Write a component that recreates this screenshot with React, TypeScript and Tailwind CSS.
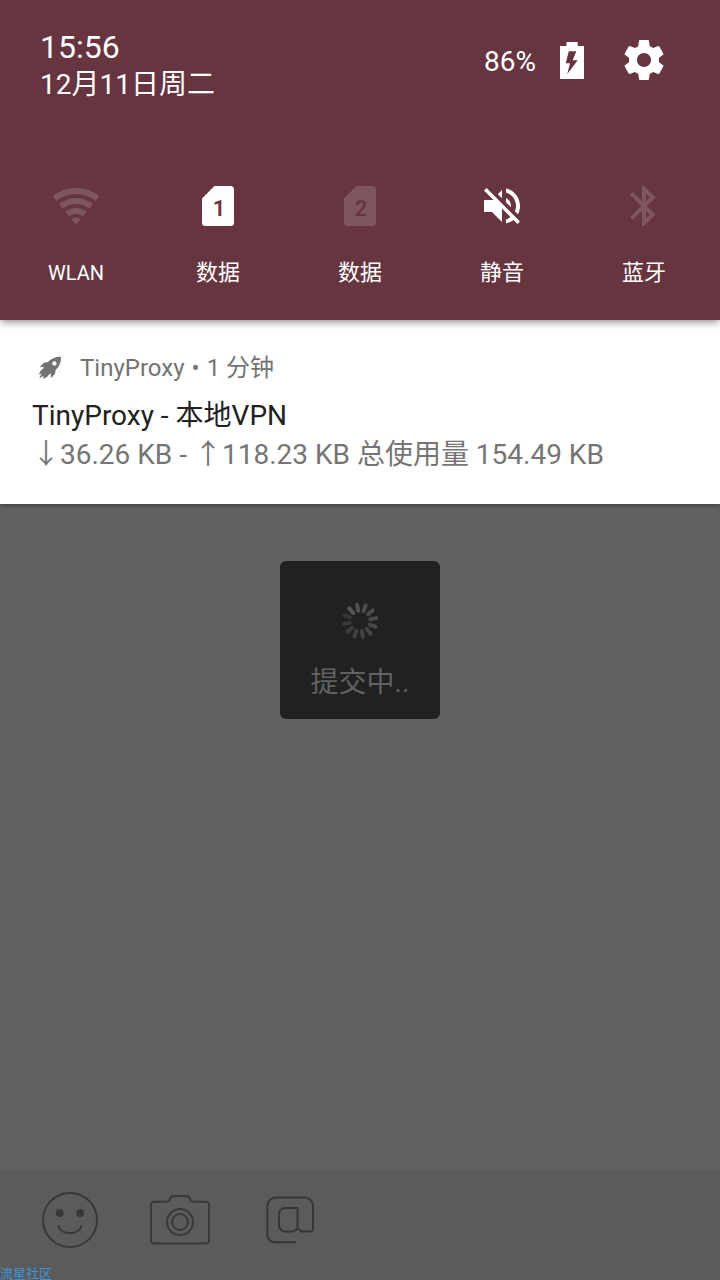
import type { ReactNode } from 'react';

const MUTED = '#7f555f';

function WifiIcon() {
  return (
    <svg width="48" height="48" viewBox="0 0 48 48" fill="none" stroke={MUTED} strokeWidth="6" aria-hidden="true">
      <path d="M2.6 16.6A34 34 0 0 1 45.4 16.6" />
      <path d="M8.9 24.4A24 24 0 0 1 39.1 24.4" />
      <path d="M15.2 32.1A14 14 0 0 1 32.8 32.1" />
      <path d="M24 42.6L19.4 37.3A7.3 7.3 0 0 1 28.6 37.3Z" fill={MUTED} stroke="none" />
    </svg>
  );
}

function SimIcon({ slot, color }: { slot: string; color: string }) {
  return (
    <svg width="48" height="48" viewBox="0 0 48 48" aria-hidden="true">
      <path d="M20.4 4H36.5A3.5 3.5 0 0 1 40 7.5V40.5A3.5 3.5 0 0 1 36.5 44H11.5A3.5 3.5 0 0 1 8 40.5V16.4Z" fill={color} />
      <text x="25" y="34" textAnchor="middle" className="font-['Roboto',sans-serif] text-[22px] font-semibold" fill="#663540">
        {slot}
      </text>
    </svg>
  );
}

function MuteIcon() {
  return (
    <svg width="48" height="48" viewBox="0 0 24 24" fill="#fff" aria-hidden="true">
      <path d="M16.5 12c0-1.77-1.02-3.29-2.5-4.03v2.21l2.45 2.45c.03-.2.05-.41.05-.63zm2.5 0c0 .94-.2 1.82-.54 2.64l1.51 1.51C20.63 14.91 21 13.5 21 12c0-4.28-2.99-7.86-7-8.77v2.06c2.89.86 5 3.54 5 6.71zM4.27 3L3 4.27 7.73 9H3v6h4l5 5v-6.73l4.25 4.25c-.67.52-1.42.93-2.25 1.18v2.06c1.38-.31 2.63-.95 3.69-1.81L19.73 21 21 19.73l-9-9L4.27 3zM12 4L9.91 6.09 12 8.18V4z" />
    </svg>
  );
}

function BluetoothIcon() {
  return (
    <svg width="48" height="48" viewBox="0 0 24 24" fill={MUTED} aria-hidden="true">
      <path d="M17.71 7.71L12 2h-1v7.59L6.41 5 5 6.41 10.59 12 5 17.59 6.41 19 11 14.41V22h1l5.71-5.71-4.3-4.29 4.3-4.29zM13 5.83l1.88 1.88L13 9.59V5.83zm1.88 10.46L13 18.17v-3.76l1.88 1.88z" />
    </svg>
  );
}

function BatteryIcon() {
  return (
    <svg width="24" height="37" viewBox="0 0 24 37" fill="#fff" fillRule="evenodd" aria-hidden="true">
      <path d="M6.5 0H17.7V4H24V37H0V4H6.5ZM8.8 9.3L5.7 21.3H10L7.3 32L17.7 18.3H12.7L16.3 9.3Z" />
    </svg>
  );
}

function GearIcon() {
  return (
    <svg width="48" height="48" viewBox="0 0 24 24" fill="#fff" aria-hidden="true">
      <path d="M19.43 12.98c.04-.32.07-.64.07-.98s-.03-.66-.07-.98l2.11-1.65c.19-.15.24-.42.12-.64l-2-3.46c-.12-.22-.39-.3-.61-.22l-2.49 1c-.52-.4-1.08-.73-1.69-.98l-.38-2.65C14.46 2.18 14.25 2 14 2h-4c-.25 0-.46.18-.49.42l-.38 2.65c-.61.25-1.17.59-1.69.98l-2.49-1c-.23-.09-.49 0-.61.22l-2 3.46c-.13.22-.07.49.12.64l2.11 1.65c-.04.32-.07.65-.07.98s.03.66.07.98l-2.11 1.65c-.19.15-.24.42-.12.64l2 3.46c.12.22.39.3.61.22l2.49-1c.52.4 1.08.73 1.69.98l.38 2.65c.03.24.24.42.49.42h4c.25 0 .46-.18.49-.42l.38-2.65c.61-.25 1.17-.59 1.69-.98l2.49 1c.23.09.49 0 .61-.22l2-3.46c.12-.22.07-.49-.12-.64l-2.11-1.65zM12 15.5c-1.93 0-3.5-1.57-3.5-3.5s1.57-3.5 3.5-3.5 3.5 1.57 3.5 3.5-1.57 3.5-3.5 3.5z" />
    </svg>
  );
}

function RocketIcon() {
  return (
    <svg width="24" height="24" viewBox="0 0 24 24" fill="#737373" fillRule="evenodd" aria-hidden="true">
      <path d="M23 .8C17.5 .6 13 2.6 9.6 6.3C6.5 6 4.2 7.6 1.8 11.2L6 10.7L5 12.8C3.2 13.8 1.6 16 1 18.8L3.6 17.2L1.2 22.3L5.8 19.7L5 22.5C8 22 10 20.5 10.8 18.7L13 17.6L12.6 22C16.2 19.5 17.8 17 17.5 14.2C21.2 10.8 23.2 6.5 23 .8ZM16.4 5.2A2.2 2.2 0 1 1 16.4 9.6A2.2 2.2 0 1 1 16.4 5.2Z" />
    </svg>
  );
}

const SPOKES = ['#515151', '#4d4d4d', '#4b4b4b', '#494949', '#474747', '#454545', '#434343', '#414141', '#3d3d3d', '#393939', '#353535', '#565656'];

function Spinner() {
  return (
    <svg width="40" height="40" viewBox="-20 -20 40 40" strokeWidth="4" strokeLinecap="round" aria-hidden="true">
      {SPOKES.map((color, i) => (
        <path key={color} d="M0 -10.5V-16.5" stroke={color} transform={`rotate(${i * 30 - 10})`} />
      ))}
    </svg>
  );
}

function SmileIcon() {
  return (
    <svg width="60" height="60" viewBox="0 0 60 60" fill="none" stroke="#393939" strokeWidth="2" strokeLinecap="round" aria-hidden="true">
      <circle cx="30" cy="30" r="27" />
      <circle cx="19.7" cy="23" r="4" fill="#393939" stroke="none" />
      <circle cx="40.3" cy="23" r="4" fill="#393939" stroke="none" />
      <path d="M18.5 36C21 45.5 39 45.5 41.5 36" />
    </svg>
  );
}

function CameraIcon() {
  return (
    <svg width="60" height="60" viewBox="0 0 60 60" fill="none" stroke="#393939" strokeWidth="2" strokeLinejoin="round" aria-hidden="true">
      <path d="M4 11.7H16.5C18.5 11.7 19.3 10.5 20 8.8C20.8 6.8 22 6 24 6H36C38 6 39.2 6.8 40 8.8C40.7 10.5 41.5 11.7 43.5 11.7H56A3 3 0 0 1 59 14.7V50.5A3 3 0 0 1 56 53.5H4A3 3 0 0 1 1 50.5V14.7A3 3 0 0 1 4 11.7Z" />
      <circle cx="30" cy="32" r="13" />
      <circle cx="30" cy="32" r="8" />
    </svg>
  );
}

function MentionIcon() {
  return (
    <svg width="60" height="60" viewBox="0 0 60 60" fill="none" stroke="#35353a" strokeWidth="2" strokeLinecap="round" strokeLinejoin="round" aria-hidden="true">
      <path d="M35 52.3H15.5A8 8 0 0 1 7.3 44V16A8.5 8.5 0 0 1 15.8 7.5H44.5A8.5 8.5 0 0 1 53 16V38.5A3 3 0 0 1 50 41.5H41.5L37.5 38.5V18H25A6 6 0 0 0 19 24V35.5A6 6 0 0 0 25 41.5H33.5L37.5 38.5" />
    </svg>
  );
}

function Tile({ icon, label, small }: { icon: ReactNode; label: string; small?: boolean }) {
  return (
    <button type="button" className="flex flex-col items-center gap-6">
      {icon}
      <span className={small ? 'text-[20px] leading-[38px]' : 'text-[22px] leading-[38px]'}>{label}</span>
    </button>
  );
}

export default function App() {
  return (
    <div className="relative flex min-h-screen flex-col overflow-hidden bg-[#616161] font-['Roboto','Noto_Sans_CJK_SC',sans-serif]">
      <header className="relative z-20 bg-[#663540] pb-7 text-white shadow-[0_2px_8px_rgba(0,0,0,0.45)]">
        <div className="flex items-start justify-between pt-7 pr-[52px] pl-10">
          <div>
            <div className="text-[32px] leading-[38px]">15:56</div>
            <div className="text-[28px] leading-[38px]">12月11日周二</div>
          </div>
          <div className="flex items-center pt-2">
            <span className="mr-6 pt-1 text-[28px] leading-9">86%</span>
            <BatteryIcon />
            <button type="button" aria-label="设置" className="ml-9">
              <GearIcon />
            </button>
          </div>
        </div>
        <nav className="mt-[78px] grid grid-cols-5 px-[5px]">
          <Tile icon={<WifiIcon />} label="WLAN" small />
          <Tile icon={<SimIcon slot="1" color="#ffffff" />} label="数据" />
          <Tile icon={<SimIcon slot="2" color={MUTED} />} label="数据" />
          <Tile icon={<MuteIcon />} label="静音" />
          <Tile icon={<BluetoothIcon />} label="蓝牙" />
        </nav>
      </header>

      <article className="relative z-10 bg-white px-8 pt-[30px] pb-[30px] shadow-[0_1px_4px_rgba(0,0,0,0.4)]">
        <div className="flex items-center pl-1.5 text-[24px] leading-9 text-[#737373]">
          <RocketIcon />
          <span className="ml-[18px]">TinyProxy</span>
          <span className="mx-[7px]">•</span>
          <span>1 分钟</span>
        </div>
        <h1 className="mt-[11px] text-[28px] leading-[38px] text-[#212121]">TinyProxy - 本地VPN</h1>
        <p className="text-[28px] leading-[39px] text-[#757575]">↓36.26 KB - ↑118.23 KB 总使用量 154.49 KB</p>
      </article>

      <div className="absolute inset-0 flex items-center justify-center">
        <div role="status" className="flex w-40 flex-col items-center rounded-md bg-[#212121] pt-10 pb-4">
          <Spinner />
          <span className="mt-[22px] text-[28px] leading-10 text-[#616161]">提交中..</span>
        </div>
      </div>

      <footer className="mt-auto flex gap-[50px] bg-[#5b5b5b] px-10 pt-5 pb-[30px]">
        <button type="button" aria-label="表情">
          <SmileIcon />
        </button>
        <button type="button" aria-label="相机">
          <CameraIcon />
        </button>
        <button type="button" aria-label="提及">
          <MentionIcon />
        </button>
      </footer>

      <span className="absolute bottom-0 left-0 text-[13px] leading-3 text-[#3d96dc]">流星社区</span>
    </div>
  );
}
